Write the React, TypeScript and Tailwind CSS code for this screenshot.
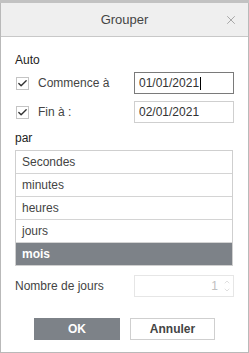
import { Check, ChevronUp, ChevronDown, X } from "lucide-react";

const units = ["Secondes", "minutes", "heures", "jours", "mois"];

function Checkbox() {
  return (
    <span className="flex h-[13px] w-[13px] items-center justify-center border border-[#c4c4c4] bg-white">
      <Check className="h-[11px] w-[11px] text-[#333]" strokeWidth={3} />
    </span>
  );
}

export default function App() {
  return (
    <div
      className="flex h-[353px] w-[249px] flex-col bg-white text-[12px] leading-[14px] text-[#444]"
      style={{ fontFamily: '"Liberation Sans", Arial, sans-serif' }}
    >
      <div className="h-[3px] bg-[#c2c2c2]" />
      <div className="flex flex-1 flex-col border-x border-b border-[#b9b9b9]">
        <div className="relative flex h-[34px] items-center justify-center border-b border-[#c8c8c8] bg-[#efefef]">
          <span className="text-[13px] text-[#444]">Grouper</span>
          <X className="absolute right-[10px] top-[10px] h-[14px] w-[14px] text-[#8a8a8a]" strokeWidth={1.2} />
        </div>

        <div className="flex flex-col px-[14px]">
          <div className="mt-[16px] text-[#222]">Auto</div>

          <div className="mt-[5px] flex items-center">
            <div className="flex flex-1 items-center gap-[9px] pl-[1px]">
              <Checkbox />
              <span>Commence à</span>
            </div>
            <div className="flex h-[22px] w-[100px] items-center border border-[#7a7a7a] pl-[4px] text-[#333]">
              01/01/2021<span className="ml-[1px] h-[13px] w-px bg-black" />
            </div>
          </div>

          <div className="mt-[7px] flex items-center">
            <div className="flex flex-1 items-center gap-[9px] pl-[1px]">
              <Checkbox />
              <span>Fin à :</span>
            </div>
            <div className="flex h-[22px] w-[100px] items-center border border-[#cfcfcf] pl-[4px] text-[#333]">
              02/01/2021
            </div>
          </div>

          <div className="mt-[8px] text-[#222]">par</div>

          <div className="mr-[1px] mt-[5px] flex flex-col border border-[#cfcfcf]">
            {units.map((u) => (
              <div
                key={u}
                className={
                  u === "mois"
                    ? "flex h-[22px] items-center bg-[#7d8288] pl-[6px] font-bold text-white"
                    : "flex h-[23px] items-center border-b border-[#d4d4d4] pl-[6px] text-[#444]"
                }
              >
                {u}
              </div>
            ))}
          </div>

          <div className="mt-[9px] flex items-center">
            <span className="flex-1">Nombre de jours</span>
            <div className="flex h-[22px] w-[100px] items-center justify-end border border-[#e6e6e6] pr-[2px] text-[#c0c0c0]">
              <span>1</span>
              <div className="ml-[5px] flex flex-col">
                <ChevronUp className="h-[8px] w-[8px]" strokeWidth={1.5} />
                <ChevronDown className="h-[8px] w-[8px]" strokeWidth={1.5} />
              </div>
            </div>
          </div>

          <div className="mt-[21px] flex justify-center gap-[10px]">
            <button className="h-[22px] w-[86px] bg-[#7d8288] font-bold text-white">OK</button>
            <button className="h-[22px] w-[85px] border border-[#cfcfcf] bg-white font-bold text-[#444]">
              Annuler
            </button>
          </div>
        </div>
      </div>
    </div>
  );
}
